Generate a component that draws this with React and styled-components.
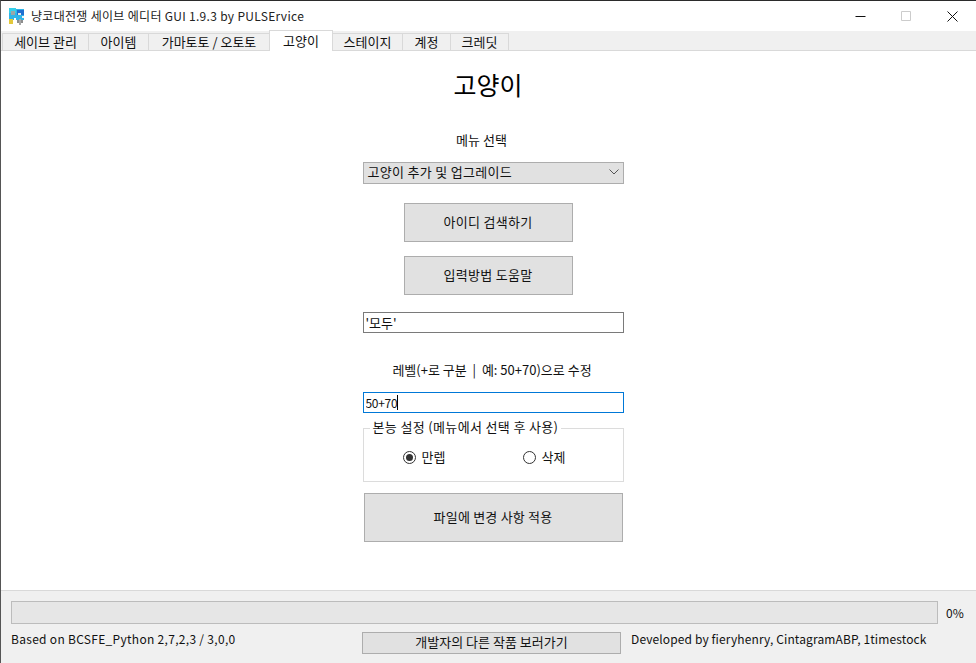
import { useState } from "react";
import styled, { createGlobalStyle } from "styled-components";

const FONT = `"Noto Sans CJK KR", "Liberation Sans", sans-serif`;
const tabs = ["세이브 관리", "아이템", "가마토토 / 오토토", "고양이", "스테이지", "계정", "크레딧"];
const tabWidths = [87, 61, 122, 64, 71, 49, 59];

const Global = createGlobalStyle`
  html, body { margin: 0; padding: 0; background: #fff; }
  * { box-sizing: border-box; }
`;

function AppIcon() {
  return (
    <svg width="17" height="17" viewBox="0 0 17 17" shapeRendering="crispEdges">
      <rect x="1" y="1" width="15" height="11" fill="#2fb4e8" />
      <rect x="1" y="0" width="7" height="5" fill="#35d0ea" />
      <rect x="9" y="2" width="7" height="5" fill="#1f6fd0" />
      <rect x="3" y="3" width="4" height="4" fill="#9aa7a8" />
      <rect x="10" y="5" width="3" height="2" fill="#e8e8e8" />
      <rect x="14" y="8" width="2" height="2" fill="#f4f4f4" />
      <rect x="1" y="11" width="4" height="5" fill="#e3c83a" />
      <rect x="6" y="10" width="2" height="2" fill="#ffffff" />
      <rect x="9" y="12" width="6" height="3" fill="#8d8d8d" />
      <rect x="11" y="11" width="2" height="6" fill="#a8a8a8" />
      <rect x="5" y="12" width="4" height="5" fill="#ffffff" />
    </svg>
  );
}

export default function App() {
  const [active, setActive] = useState("고양이");
  const [radio, setRadio] = useState("max");

  return (
    <>
      <Global />
      <Window>
        <TitleBar>
          <AppIcon />
          <Title>냥코대전쟁 세이브 에디터 GUI 1.9.3 by PULSErvice</Title>
          <Controls>
            <Control>
              <svg width="11" height="11" viewBox="0 0 11 11">
                <path d="M0.5 5.5h10" stroke="#111" fill="none" />
              </svg>
            </Control>
            <Control>
              <svg width="11" height="11" viewBox="0 0 11 11">
                <path d="M0.5 0.5h9v9h-9z" stroke="#ccc" fill="none" />
              </svg>
            </Control>
            <Control>
              <svg width="11" height="11" viewBox="0 0 11 11">
                <path d="M0.5 0.5l10 10M10.5 0.5l-10 10" stroke="#111" fill="none" />
              </svg>
            </Control>
          </Controls>
        </TitleBar>

        <TabBar>
          {tabs.map((t, i) => (
            <Tab key={t} $w={tabWidths[i]} $on={t === active} onClick={() => setActive(t)}>
              {t}
            </Tab>
          ))}
        </TabBar>

        <Content>
          <Heading>고양이</Heading>
          <Label $top={32} $shift={-13}>메뉴 선택</Label>
          <Select $top={14}>
            고양이 추가 및 업그레이드
            <svg width="10" height="6" viewBox="0 0 10 6">
              <path d="M0.5 0.5L5 5L9.5 0.5" stroke="#555" fill="none" />
            </svg>
          </Select>
          <Button $w={169} $h={39} $top={19}>아이디 검색하기</Button>
          <Button $w={169} $h={39} $top={14}>입력방법 도움말</Button>
          <FieldWrap $top={17}>
            <Field defaultValue="'모두'" />
          </FieldWrap>
          <Label $top={29} $shift={8}>레벨(+로 구분 &nbsp;|&nbsp; 예: 50+70)으로 수정</Label>
          <FieldWrap $top={14}>
            <Field $focus defaultValue="50+70" />
            <Caret />
          </FieldWrap>
          <Group>
            <Legend>본능 설정 (메뉴에서 선택 후 사용)</Legend>
            <RadioRow>
              <RadioItem onClick={() => setRadio("max")}>
                <RadioDot $on={radio === "max"} />
                만렙
              </RadioItem>
              <RadioItem onClick={() => setRadio("del")}>
                <RadioDot $on={radio === "del"} />
                삭제
              </RadioItem>
            </RadioRow>
          </Group>
          <Button $w={259} $h={49} $top={11} $wide>파일에 변경 사항 적용</Button>
        </Content>

        <Footer>
          <ProgressRow>
            <Progress />
            <span>0%</span>
          </ProgressRow>
          <BottomRow>
            <BasedNote>Based on BCSFE_Python 2,7,2,3 / 3,0,0</BasedNote>
            <SmallButton>개발자의 다른 작품 보러가기</SmallButton>
            <DevNote>Developed by fieryhenry, CintagramABP, 1timestock</DevNote>
          </BottomRow>
        </Footer>
      </Window>
    </>
  );
}

const Window = styled.div`
  width: 976px;
  height: 663px;
  display: flex;
  flex-direction: column;
  overflow: hidden;
  background: #fff;
  border-top: 1px solid #2b2b2b;
  border-left: 1px solid #555;
  color: #111;
  font: 13px/16px ${FONT};
`;

const TitleBar = styled.div`
  height: 30px;
  flex: none;
  display: flex;
  align-items: center;
  gap: 6px;
  padding-left: 7px;
  background: #fff;
`;

const Title = styled.div`
  font-size: 12px;
  color: #222;
  white-space: nowrap;
  letter-spacing: 0.3px;
`;

const Controls = styled.div`
  margin-left: auto;
  display: flex;
`;

const Control = styled.div`
  width: 45px;
  height: 30px;
  display: flex;
  align-items: center;
  justify-content: center;

  & + & {
    margin-left: 1px;
  }

  &:last-child {
    margin-right: 1px;
  }
`;

const TabBar = styled.div`
  height: 20px;
  flex: none;
  display: flex;
  align-items: flex-end;
  padding-left: 1px;
  background: #f0f0f0;
  border-bottom: 1px solid #d9d9d9;
`;

const Tab = styled.div`
  width: ${(p) => p.$w}px;
  height: ${(p) => (p.$on ? 21 : 18)}px;
  margin-bottom: -1px;
  margin-right: -1px;
  display: flex;
  align-items: center;
  justify-content: center;
  border: 1px solid #d9d9d9;
  border-bottom: ${(p) => (p.$on ? "none" : "1px solid #d9d9d9")};
  background: ${(p) => (p.$on ? "#fff" : "#f0f0f0")};
  position: relative;
  z-index: ${(p) => (p.$on ? 1 : 0)};
  font-size: 13px;
  white-space: nowrap;
`;

const Content = styled.div`
  flex: 1;
  display: flex;
  flex-direction: column;
  align-items: center;
  padding-top: 17px;
  padding-right: 1px;
`;

const Heading = styled.h1`
  margin: 0;
  height: 32px;
  font-size: 25px;
  line-height: 32px;
  font-weight: 400;
  color: #000;
`;

const Label = styled.div`
  margin-top: ${(p) => p.$top}px;
  margin-left: ${(p) => Math.max(p.$shift, 0)}px;
  margin-right: ${(p) => Math.max(-p.$shift, 0)}px;
  height: 16px;
  white-space: nowrap;
  font-size: 13px;
`;

const Select = styled.div`
  margin-top: ${(p) => p.$top}px;
  margin-left: 10px;
  width: 261px;
  height: 22px;
  flex: none;
  display: flex;
  align-items: center;
  justify-content: space-between;
  padding: 0 4px 2px;
  background: #e1e1e1;
  border: 1px solid #adadad;
  letter-spacing: 0.3px;
`;

const Button = styled.button`
  margin-top: ${(p) => p.$top}px;
  margin-left: ${(p) => (p.$wide ? 10 : 0)}px;
  width: ${(p) => p.$w}px;
  height: ${(p) => p.$h}px;
  flex: none;
  padding: 0 0 2px;
  background: #e1e1e1;
  border: 1px solid #adadad;
  color: #111;
  font: 13px/16px ${FONT};
  letter-spacing: ${(p) => (p.$wide ? 0.2 : 0.3)}px;
`;

const FieldWrap = styled.div`
  margin-top: ${(p) => p.$top}px;
  margin-left: 10px;
  width: 261px;
  height: 21px;
  flex: none;
  position: relative;
`;

const Field = styled.input`
  display: block;
  width: 100%;
  height: 100%;
  padding: 0 2px;
  background: #fff;
  border: 1px solid ${(p) => (p.$focus ? "#0078d7" : "#7a7a7a")};
  outline: none;
  color: #111;
  font: ${(p) => (p.$focus ? 12 : 13)}px/16px ${FONT};
  letter-spacing: ${(p) => (p.$focus ? -0.3 : 0)}px;
`;

const Caret = styled.span`
  position: absolute;
  left: 34px;
  top: 3px;
  width: 1px;
  height: 15px;
  background: #000;
`;

const Group = styled.fieldset`
  margin: 7px 0 0 10px;
  width: 261px;
  height: 62px;
  flex: none;
  padding: 0;
  border: 1px solid #dcdcdc;
`;

const Legend = styled.legend`
  margin-left: 6px;
  padding: 0 3px;
  height: 16px;
  font-size: 13px;
  line-height: 14px;
  letter-spacing: 0.35px;
  white-space: nowrap;
`;

const RadioRow = styled.div`
  display: flex;
  gap: 80px;
  padding: 13px 0 0 39px;
`;

const RadioItem = styled.div`
  display: flex;
  align-items: center;
  gap: 6px;
  width: 40px;
  white-space: nowrap;
  font-size: 13px;
`;

const RadioDot = styled.span`
  width: 13px;
  height: 13px;
  flex: none;
  border-radius: 50%;
  border: 1px solid #333;
  background: #fff;
  display: flex;
  align-items: center;
  justify-content: center;

  &::after {
    content: "";
    width: 7px;
    height: 7px;
    border-radius: 50%;
    background: ${(p) => (p.$on ? "#333" : "transparent")};
  }
`;

const Footer = styled.div`
  height: 73px;
  flex: none;
  background: #f0f0f0;
  border-top: 1px solid #d9d9d9;
  padding: 10px 0 0 10px;
`;

const ProgressRow = styled.div`
  display: flex;
  align-items: center;
  gap: 8px;
  font-size: 12px;
`;

const Progress = styled.div`
  width: 927px;
  height: 23px;
  background: #e6e6e6;
  border: 1px solid #bcbcbc;
`;

const BottomRow = styled.div`
  display: flex;
  align-items: flex-start;
  margin-top: 8px;
  font-size: 12px;
  white-space: nowrap;
`;

const BasedNote = styled.span`
  width: 351px;
  margin-top: -1px;
  letter-spacing: 0.3px;
`;

const DevNote = styled.span`
  margin-top: -1px;
  letter-spacing: 0.12px;
`;

const SmallButton = styled.button`
  width: 259px;
  height: 22px;
  margin-right: 10px;
  padding: 0 0 2px;
  background: #e1e1e1;
  border: 1px solid #adadad;
  color: #111;
  font: 13px/16px ${FONT};
`;
